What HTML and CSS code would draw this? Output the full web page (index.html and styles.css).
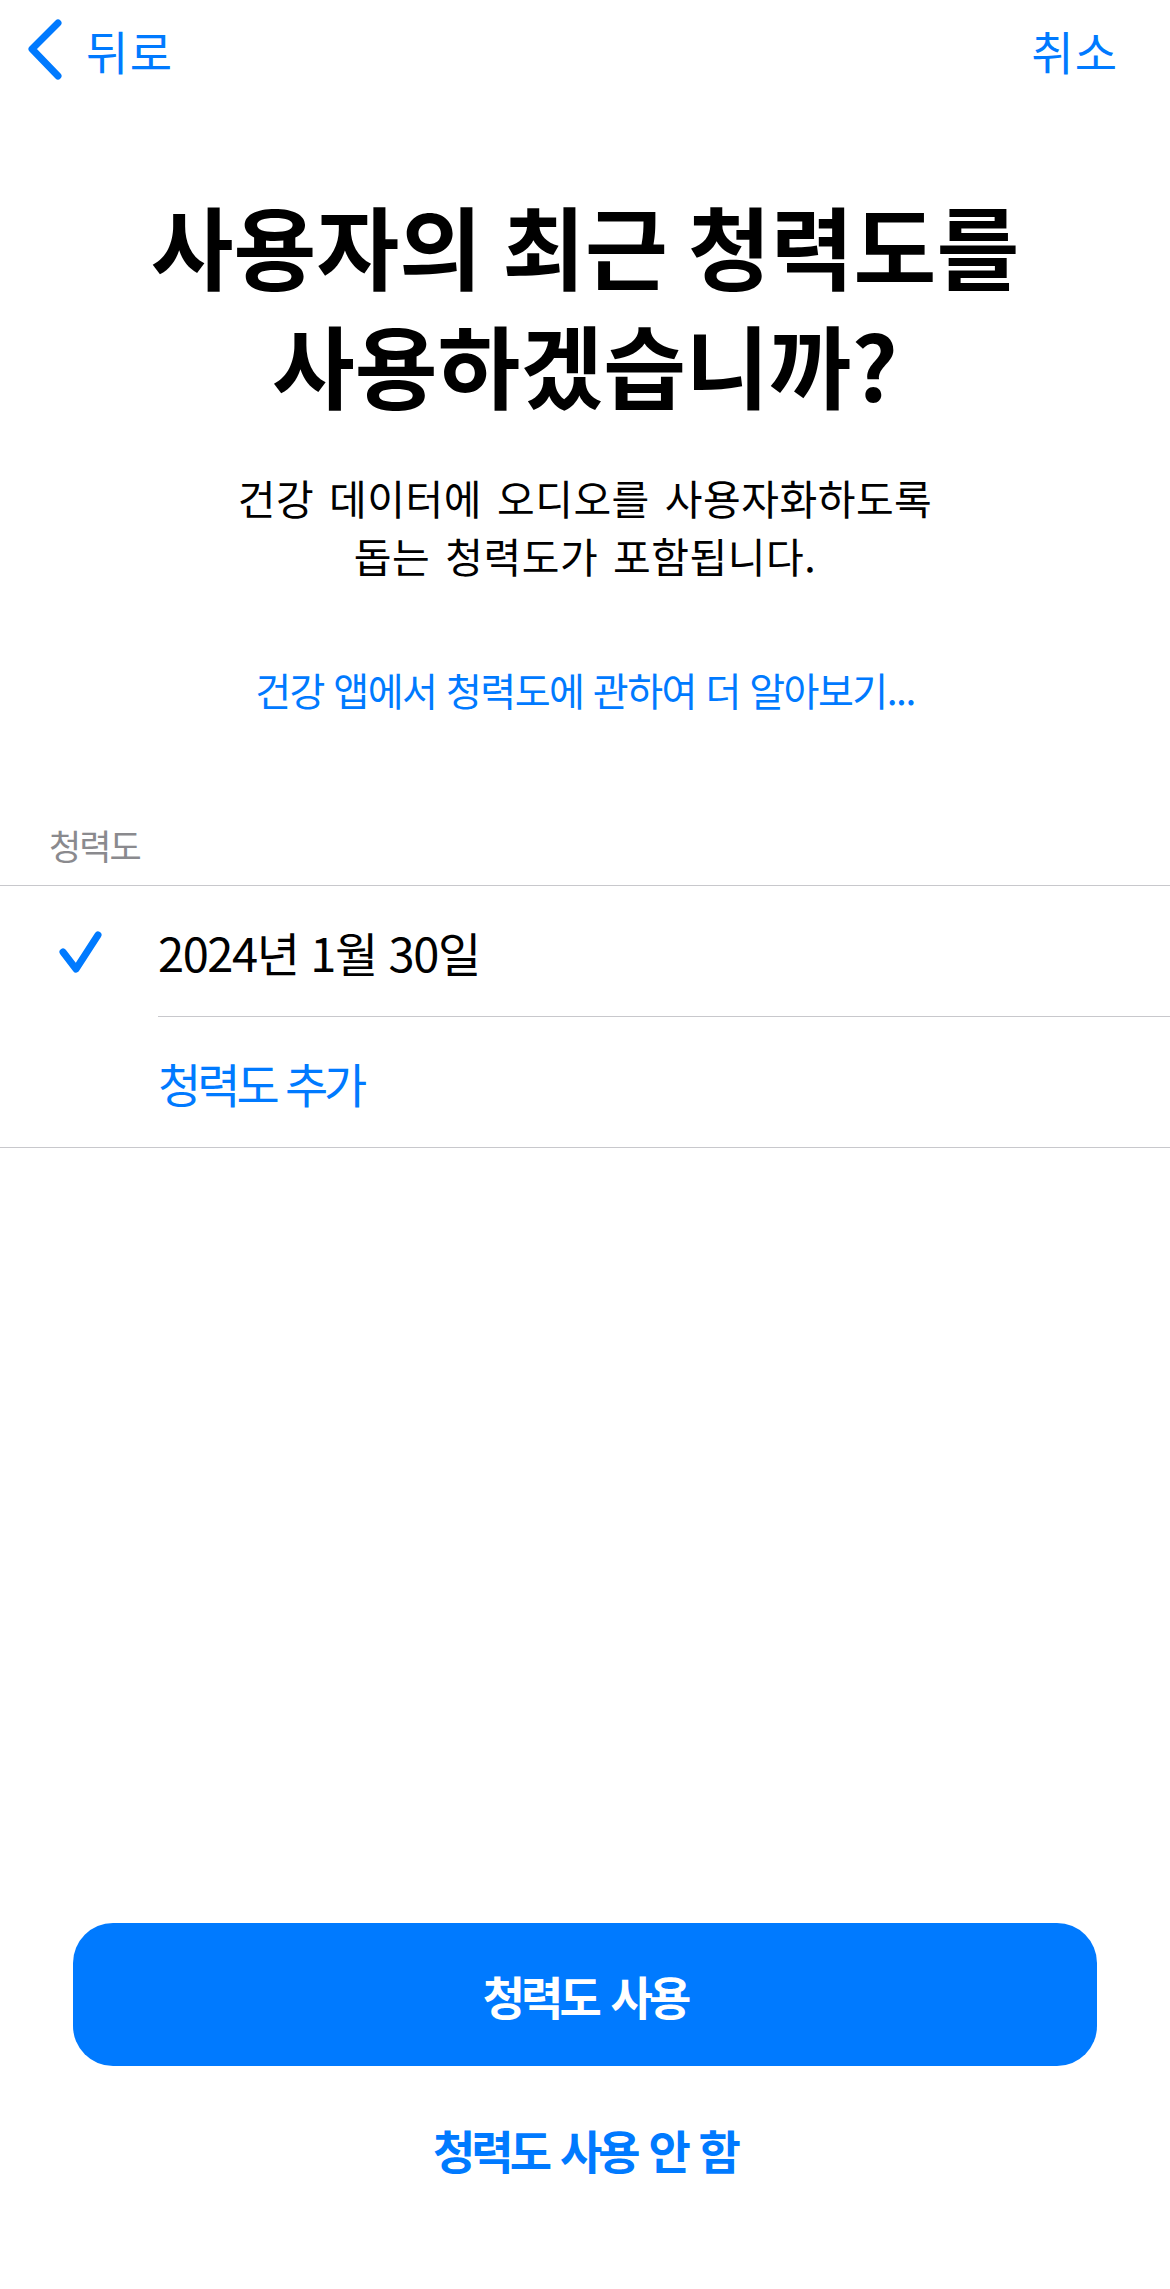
FILE: index.html
```html
<!DOCTYPE html>
<html lang="ko">
<head>
    <meta charset="utf-8" />
    <meta name="viewport" content="width=device-width, initial-scale=1.0">
    <link rel="stylesheet" href="styles.css">
    <title>청력도</title>
</head>
<body>
    <div class="screen">
        <header class="nav">
            <a class="nav-back" href="#">
                <svg class="chevron" viewBox="0 0 44 66" width="44" height="66">
                    <path d="M34 6 L8 32 L34 59" />
                </svg>
                <span>뒤로</span>
            </a>
            <a class="nav-cancel" href="#">취소</a>
        </header>

        <div class="intro">
            <h1 class="title">
                <span class="title-line">사용자의 최근 청력도를</span>
                <span class="title-line">사용하겠습니까?</span>
            </h1>
            <p class="subtitle">건강 데이터에 오디오를 사용자화하도록<br>돕는 청력도가 포함됩니다.</p>
            <a class="learn-more" href="#">건강 앱에서 청력도에 관하여 더 알아보기...</a>
        </div>

        <section class="list">
            <div class="list-header">청력도</div>
            <ul class="list-body">
                <li class="list-row">
                    <span class="check">
                        <svg viewBox="0 0 46 46" width="46" height="46">
                            <path d="M6 24 L19 41 L41 7" />
                        </svg>
                    </span>
                    <span class="row-label">2024년 1월 30일</span>
                </li>
                <li class="list-row">
                    <span class="check"></span>
                    <span class="row-label row-link">청력도 추가</span>
                </li>
            </ul>
        </section>

        <footer class="actions">
            <button class="btn-primary" type="button">청력도 사용</button>
            <button class="btn-secondary" type="button">청력도 사용 안 함</button>
        </footer>
    </div>
</body>
</html>
```

FILE: styles.css
```css
body {
    margin: 0;
    background-color: #ffffff;
    font-family: "Noto Sans CJK KR", "Noto Sans", sans-serif;
    color: #000000;
}

a {
    color: #007aff;
    text-decoration: none;
}

.screen {
    width: 1170px;
    min-height: 100vh;
    display: flex;
    flex-direction: column;
}

/* navigation bar */
.nav {
    height: 100px;
    display: flex;
    justify-content: space-between;
    align-items: center;
    padding: 0 52px 0 24px;
}

.nav-back {
    display: flex;
    align-items: center;
    gap: 18px;
    font-size: 46px;
    letter-spacing: 1.5px;
}

.chevron path {
    fill: none;
    stroke: #007aff;
    stroke-width: 7;
    stroke-linecap: round;
    stroke-linejoin: round;
}

.nav-cancel {
    font-size: 46px;
    letter-spacing: 1px;
}

/* heading block */
.intro {
    display: flex;
    flex-direction: column;
    align-items: center;
    text-align: center;
}

.title {
    margin: 86px 0 0;
    display: flex;
    flex-direction: column;
    align-items: center;
    gap: 2px;
    font-size: 90px;
    font-weight: 700;
    word-spacing: -5px;
}

.title-line {
    display: block;
    height: 117px;
    line-height: 117px;
}

.subtitle {
    margin: 46px 0 0;
    font-size: 41px;
    line-height: 58px;
    letter-spacing: 0.5px;
    word-spacing: 3px;
}

.learn-more {
    margin-top: 76px;
    font-size: 39px;
    line-height: 58px;
    letter-spacing: -1.5px;
}

/* audiogram list */
.list {
    margin-top: 102px;
}

.list-header {
    padding: 0 0 15px 49px;
    font-size: 35px;
    line-height: 50px;
    letter-spacing: -2px;
    color: #8a8a8e;
}

.list-body {
    list-style: none;
    margin: 0;
    padding: 0;
    border-top: 1px solid #c8c8cc;
    border-bottom: 1px solid #c8c8cc;
}

.list-row {
    display: flex;
    height: 130px;
}

.list-row + .list-row {
    border-top: 1px solid #c8c8cc;
    margin-left: 158px;
}

.list-row + .list-row .check {
    display: none;
}

.check {
    width: 158px;
    display: flex;
    align-items: center;
    padding-left: 57px;
    box-sizing: border-box;
}

.check path {
    fill: none;
    stroke: #007aff;
    stroke-width: 7;
    stroke-linecap: round;
    stroke-linejoin: round;
}

.row-label {
    display: flex;
    align-items: center;
    font-size: 47px;
    letter-spacing: -1.4px;
}

.row-link {
    color: #007aff;
    letter-spacing: -4px;
}

/* bottom buttons */
.actions {
    margin-top: auto;
    display: flex;
    flex-direction: column;
    padding: 0 73px 105px;
}

.btn-primary {
    height: 143px;
    border: none;
    border-radius: 40px;
    background-color: #007aff;
    color: #ffffff;
    font-family: inherit;
    font-size: 46px;
    font-weight: 600;
    letter-spacing: -4px;
    word-spacing: 4px;
}

.btn-secondary {
    height: 70px;
    margin-top: 48px;
    border: none;
    background: none;
    color: #007aff;
    font-family: inherit;
    font-size: 46px;
    font-weight: 600;
    letter-spacing: -4px;
    word-spacing: 3px;
}
```
